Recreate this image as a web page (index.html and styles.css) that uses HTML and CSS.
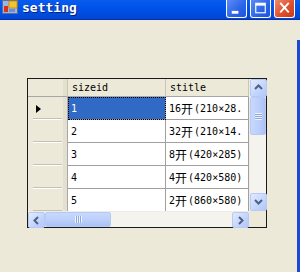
FILE: index.html
```html
<!DOCTYPE html>
<html lang="en">
<head>
    <meta charset="UTF-8">
    <title>setting</title>
    <link rel="stylesheet" href="styles.css">
</head>
<body>
    <div class="titlebar">
        <svg class="app-icon" width="16" height="14" viewBox="0 0 16 14">
            <rect x="0.5" y="0.5" width="15" height="13" fill="#9db4e0" stroke="#5a6e96"/>
            <rect x="2" y="6" width="4" height="6" fill="#d8301c"/>
            <rect x="7" y="1" width="8" height="7" fill="#f4c430" stroke="#b88a10" stroke-width="0.8"/>
            <rect x="7" y="9" width="6" height="3" fill="#6f8fd0"/>
        </svg>
        <div class="title">setting</div>
        <div class="controls">
            <div class="btn">
                <svg width="20" height="17" viewBox="0 0 20 17"><rect x="5" y="11" width="7" height="3" fill="#fff"/></svg>
            </div>
            <div class="btn">
                <svg width="20" height="17" viewBox="0 0 20 17"><rect x="5" y="3" width="10" height="10" fill="none" stroke="#fff" stroke-width="1.2"/><rect x="5" y="3" width="10" height="2.5" fill="#fff"/></svg>
            </div>
            <div class="btn close">
                <svg width="20" height="17" viewBox="0 0 20 17"><path d="M5.5 2.5 L14.5 12.5 M14.5 2.5 L5.5 12.5" stroke="#fff" stroke-width="2"/></svg>
            </div>
        </div>
    </div>
    <div class="client">
        <div class="grid">
            <div class="cells">
                <div class="row head">
                    <div class="rh"></div>
                    <div class="c1">sizeid</div>
                    <div class="c2">stitle</div>
                </div>
                <div class="row">
                    <div class="rh"><span class="arrow"></span></div>
                    <div class="c1 selected">1</div>
                    <div class="c2">16<span class="cjk">开</span>(210×28.</div>
                </div>
                <div class="row">
                    <div class="rh"></div>
                    <div class="c1">2</div>
                    <div class="c2">32<span class="cjk">开</span>(210×14.</div>
                </div>
                <div class="row">
                    <div class="rh"></div>
                    <div class="c1">3</div>
                    <div class="c2">8<span class="cjk">开</span>(420×285)</div>
                </div>
                <div class="row">
                    <div class="rh"></div>
                    <div class="c1">4</div>
                    <div class="c2">4<span class="cjk">开</span>(420×580)</div>
                </div>
                <div class="row">
                    <div class="rh"></div>
                    <div class="c1">5</div>
                    <div class="c2">2<span class="cjk">开</span>(860×580)</div>
                </div>
            </div>
            <div class="vscroll">
                <div class="sbtn">
                    <svg width="15" height="15" viewBox="0 0 15 15"><path d="M4 9 L7.5 5.5 L11 9" fill="none" stroke="#4d6185" stroke-width="2"/></svg>
                </div>
                <div class="vthumb"><span class="grip-v"></span></div>
                <div class="vtrack"></div>
                <div class="sbtn">
                    <svg width="15" height="15" viewBox="0 0 15 15"><path d="M4 6 L7.5 9.5 L11 6" fill="none" stroke="#4d6185" stroke-width="2"/></svg>
                </div>
            </div>
            <div class="hscroll">
                <div class="sbtn">
                    <svg width="15" height="15" viewBox="0 0 15 15"><path d="M9 4 L5.5 7.5 L9 11" fill="none" stroke="#4d6185" stroke-width="2"/></svg>
                </div>
                <div class="hthumb"><span class="grip-h"></span></div>
                <div class="htrack"></div>
                <div class="sbtn">
                    <svg width="15" height="15" viewBox="0 0 15 15"><path d="M6 4 L9.5 7.5 L6 11" fill="none" stroke="#4d6185" stroke-width="2"/></svg>
                </div>
            </div>
            <div class="corner"></div>
        </div>
    </div>
</body>
</html>
```

FILE: styles.css
```css
body, html {
    margin: 0;
    padding: 0;
    width: 300px;
    height: 272px;
    overflow: hidden;
    background-color: #ece9d8;
}
.titlebar {
    height: 19px;
    border-bottom: 1px solid #0a2ea8;
    background: linear-gradient(#0a5cf0, #0053e8 40%, #0046d6);
    display: flex;
    align-items: flex-start;
}
.app-icon {
    margin-left: 2px;
    flex: none;
}
.title {
    margin-left: 4px;
    margin-top: 1px;
    font-family: 'DejaVu Sans Mono', monospace;
    font-weight: bold;
    font-size: 13px;
    line-height: 14px;
    color: #fff;
    text-shadow: 1px 1px 0 #0a2070;
    flex: 1;
}
.controls {
    display: flex;
    gap: 3px;
    margin-right: 5px;
}
.btn {
    width: 19px;
    height: 17px;
    border: 1px solid #fff;
    border-top: none;
    border-radius: 0 0 3px 3px;
    background: linear-gradient(135deg, #5b8cf5, #2a63e8 60%, #1f54d8);
    display: flex;
}
.btn svg {
    width: 19px;
}
.btn.close {
    background: linear-gradient(135deg, #f08a6a, #e0502d 55%, #c83a18);
}
.client {
    height: 252px;
    padding-top: 58px;
    padding-left: 27px;
    box-sizing: border-box;
    background:
        linear-gradient(#ece9d8, #ece9d8) top / 100% 20px no-repeat,
        linear-gradient(to right, #ece9d8 297px, #1a48d8 297px);
}
.grid {
    width: 238px;
    height: 148px;
    border: 1px solid #1a1a1a;
    background: #fff;
    display: grid;
    grid-template-columns: 221px 17px;
    grid-template-rows: 132px 16px;
}
.cells {
    overflow: hidden;
    font-family: 'DejaVu Sans Mono', 'Noto Sans CJK SC', monospace;
    font-size: 10px;
    color: #000;
}
.row {
    display: flex;
    height: 23px;
}
.row > div {
    box-sizing: border-box;
    border-right: 1px solid #a0a0a0;
    border-bottom: 1px solid #a0a0a0;
    display: flex;
    align-items: center;
    white-space: nowrap;
    overflow: hidden;
}
.row.head {
    height: 18px;
}
.row.head > div {
    background: #ece9d8;
    border-right: 1px solid #c8c6b6;
    border-bottom: 1px solid #a7a6aa;
    padding-left: 4px;
}
.rh {
    width: 40px;
    background: #ece9d8;
    justify-content: flex-start;
    box-shadow: inset -4px 0 0 #e3e0cd;
    position: relative;
}
.row > .rh {
    border-bottom: none;
    border-right: 1px solid #a7a6aa;
}
.row:not(.head) > .rh::after {
    content: '';
    position: absolute;
    left: 5px;
    right: 5px;
    bottom: 0;
    height: 1px;
    background: #c5c2b2;
    border-bottom: 1px solid #fff;
}
.arrow {
    margin-left: 8px;
    width: 0;
    height: 0;
    border-top: 4px solid transparent;
    border-bottom: 4px solid transparent;
    border-left: 5px solid #000;
}
.c1 {
    width: 98px;
    padding-left: 3px;
}
.c2 {
    width: 83px;
    padding-left: 3px;
}
.cjk {
    font-family: 'Noto Sans CJK SC', sans-serif;
    font-size: 12px;
    margin-right: 1px;
}
.selected {
    background: #316ac5;
    color: #fff;
    outline: 1px dotted #000;
    outline-offset: -1px;
}
.vscroll {
    display: flex;
    flex-direction: column;
    background: #f4f3ee;
    border-left: 1px solid #eeede5;
}
.hscroll {
    display: flex;
    background: #f4f3ee;
    border-top: 1px solid #eeede5;
}
.sbtn {
    width: 15px;
    height: 15px;
    flex: none;
    border: 1px solid #b7c9f5;
    border-radius: 2px;
    background: linear-gradient(135deg, #e2ebfd, #c3d4fc 60%, #b2c6f8);
    display: flex;
    margin: 0;
}
.vscroll .sbtn {
    width: 15px;
    height: 16px;
}
.hscroll .sbtn {
    width: 15px;
    height: 14px;
}
.vthumb {
    height: 36px;
    border: 1px solid #b7c9f5;
    border-radius: 2px;
    background: linear-gradient(to right, #c8d8fc, #bcd0fb 50%, #acc2f4);
    display: flex;
    align-items: center;
    justify-content: center;
    flex: none;
}
.vtrack, .htrack {
    flex: 1;
}
.hthumb {
    width: 64px;
    border: 1px solid #b7c9f5;
    border-radius: 2px;
    background: linear-gradient(#c8d8fc, #bcd0fb 50%, #acc2f4);
    display: flex;
    align-items: center;
    justify-content: center;
    flex: none;
}
.grip-v {
    width: 7px;
    height: 7px;
    background: repeating-linear-gradient(#eef3fe 0 1px, #8da7df 1px 2px);
}
.grip-h {
    width: 7px;
    height: 7px;
    background: repeating-linear-gradient(to right, #eef3fe 0 1px, #8da7df 1px 2px);
}
.corner {
    background: #ece9d8;
}
```
